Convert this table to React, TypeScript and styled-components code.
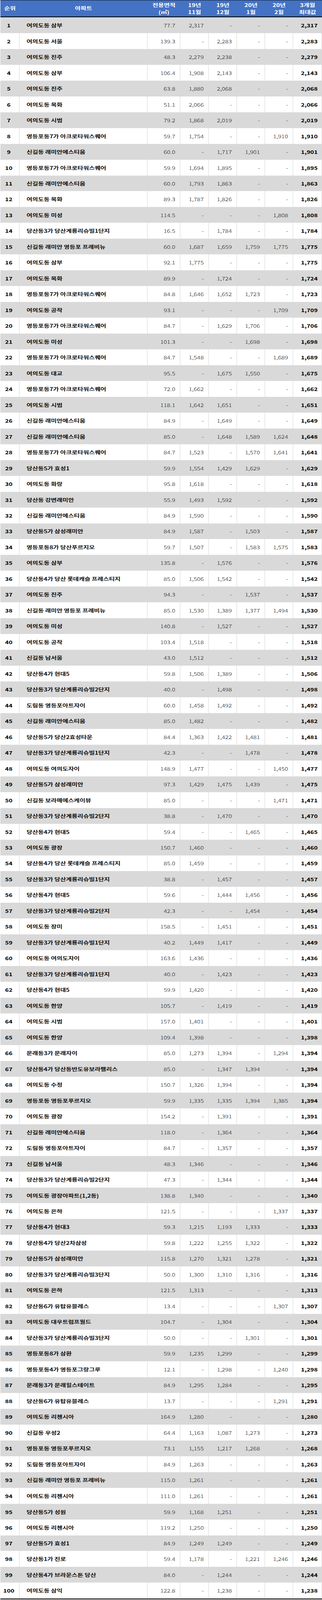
import React from "react";
import styled, { createGlobalStyle } from "styled-components";

const GlobalStyle = createGlobalStyle`
  html, body { margin: 0; padding: 0; background: #ffffff; }
  body { font-family: "Noto Sans CJK KR", "Noto Sans", sans-serif; color: #000; }
  * { box-sizing: border-box; }
`;

const RAW = `여의도동 삼부|77.7|2,317|-|-|-|2,317
여의도동 서울|139.3|-|2,283|-|-|2,283
여의도동 진주|48.3|2,279|2,238|-|-|2,279
여의도동 삼부|106.4|1,908|2,143|-|-|2,143
여의도동 진주|63.8|1,880|2,068|-|-|2,068
여의도동 목화|51.1|2,066|-|-|-|2,066
여의도동 시범|79.2|1,868|2,019|-|-|2,019
영등포동7가 아크로타워스퀘어|59.7|1,754|-|-|1,910|1,910
신길동 래미안에스티움|60.0|-|1,717|1,901|-|1,901
영등포동7가 아크로타워스퀘어|59.9|1,694|1,895|-|-|1,895
신길동 래미안에스티움|60.0|1,793|1,863|-|-|1,863
여의도동 목화|89.3|1,787|1,826|-|-|1,826
여의도동 미성|114.5|-|-|-|1,808|1,808
당산동3가 당산계룡리슈빌1단지|16.5|-|1,784|-|-|1,784
신길동 래미안 영등포 프레비뉴|60.0|1,687|1,659|1,759|1,775|1,775
여의도동 삼부|92.1|1,775|-|-|-|1,775
여의도동 목화|89.9|-|1,724|-|-|1,724
영등포동7가 아크로타워스퀘어|84.8|1,646|1,652|1,723|-|1,723
여의도동 공작|93.1|-|-|-|1,709|1,709
영등포동7가 아크로타워스퀘어|84.7|-|1,629|1,706|-|1,706
여의도동 미성|101.3|-|-|1,698|-|1,698
영등포동7가 아크로타워스퀘어|84.7|1,548|-|-|1,689|1,689
여의도동 대교|95.5|-|1,675|1,550|-|1,675
영등포동7가 아크로타워스퀘어|72.0|1,662|-|-|-|1,662
여의도동 시범|118.1|1,642|1,651|-|-|1,651
신길동 래미안에스티움|84.9|-|1,649|-|-|1,649
신길동 래미안에스티움|85.0|-|1,648|1,589|1,624|1,648
영등포동7가 아크로타워스퀘어|84.7|1,523|-|1,570|1,641|1,641
당산동5가 효성1|59.9|1,554|1,429|1,629|-|1,629
여의도동 화랑|95.8|1,618|-|-|-|1,618
당산동 강변래미안|55.9|1,493|1,592|-|-|1,592
신길동 래미안에스티움|84.9|1,590|-|-|-|1,590
당산동5가 삼성래미안|84.9|1,587|-|1,503|-|1,587
영등포동8가 당산푸르지오|59.7|1,507|-|1,583|1,575|1,583
여의도동 삼부|135.8|-|1,576|-|-|1,576
당산동4가 당산 롯데캐슬 프레스티지|85.0|1,506|1,542|-|-|1,542
여의도동 진주|94.3|-|-|1,537|-|1,537
신길동 래미안 영등포 프레비뉴|85.0|1,530|1,389|1,377|1,494|1,530
여의도동 미성|140.8|-|1,527|-|-|1,527
여의도동 공작|103.4|1,518|-|-|-|1,518
신길동 남서울|43.0|1,512|-|-|-|1,512
당산동4가 현대5|59.8|1,506|1,389|-|-|1,506
당산동3가 당산계룡리슈빌2단지|40.0|-|1,498|-|-|1,498
도림동 영등포아트자이|60.0|1,458|1,492|-|-|1,492
신길동 래미안에스티움|85.0|1,482|-|-|-|1,482
당산동5가 당산2효성타운|84.4|1,363|1,422|1,481|-|1,481
당산동3가 당산계룡리슈빌1단지|42.3|-|-|1,478|-|1,478
여의도동 여의도자이|148.9|1,477|-|-|1,450|1,477
당산동5가 삼성래미안|97.3|1,429|1,475|1,439|-|1,475
신길동 보라매에스케이뷰|85.0|-|-|-|1,471|1,471
당산동3가 당산계룡리슈빌2단지|38.8|-|1,470|-|-|1,470
당산동4가 현대5|59.4|-|-|1,465|-|1,465
여의도동 광장|150.7|1,460|-|-|-|1,460
당산동4가 당산 롯데캐슬 프레스티지|85.0|1,459|-|-|-|1,459
당산동3가 당산계룡리슈빌1단지|38.8|-|1,457|-|-|1,457
당산동4가 현대5|59.6|-|1,444|1,456|-|1,456
당산동3가 당산계룡리슈빌2단지|42.3|-|-|1,454|-|1,454
여의도동 장미|158.5|-|1,451|-|-|1,451
당산동3가 당산계룡리슈빌1단지|40.2|1,449|1,417|-|-|1,449
여의도동 여의도자이|163.6|1,436|-|-|-|1,436
당산동3가 당산계룡리슈빌1단지|40.0|-|1,423|-|-|1,423
당산동4가 현대5|59.9|1,420|-|-|-|1,420
여의도동 한양|105.7|-|1,419|-|-|1,419
여의도동 시범|157.0|1,401|-|-|-|1,401
여의도동 한양|109.4|1,398|-|-|-|1,398
문래동3가 문래자이|85.0|1,273|1,394|-|1,294|1,394
당산동4가 당산동반도유보라팰리스|85.0|-|1,347|1,394|-|1,394
여의도동 수정|150.7|1,326|1,394|-|-|1,394
영등포동 영등포푸르지오|59.9|1,335|1,335|1,394|1,385|1,394
여의도동 광장|154.2|-|1,391|-|-|1,391
신길동 래미안에스티움|118.0|-|1,364|-|-|1,364
도림동 영등포아트자이|84.7|-|1,357|-|-|1,357
신길동 남서울|48.3|1,346|-|-|-|1,346
당산동3가 당산계룡리슈빌2단지|47.3|-|1,344|-|-|1,344
여의도동 광장아파트(1,2동)|138.8|1,340|-|-|-|1,340
여의도동 은하|121.5|-|-|-|1,337|1,337
당산동4가 현대3|59.3|1,215|1,193|1,333|-|1,333
당산동4가 당산2차삼성|59.8|1,222|1,255|1,322|-|1,322
당산동5가 삼성래미안|115.8|1,270|1,321|1,278|-|1,321
당산동3가 당산계룡리슈빌3단지|50.0|1,300|1,310|1,316|-|1,316
여의도동 은하|121.5|1,313|-|-|-|1,313
당산동6가 유탑유블레스|13.4|-|-|-|1,307|1,307
여의도동 대우트럼프월드|104.7|-|1,304|-|-|1,304
당산동3가 당산계룡리슈빌3단지|50.0|-|-|1,301|-|1,301
영등포동8가 삼환|59.9|1,235|1,299|-|-|1,299
영등포동4가 영등포그랑그루|12.1|-|1,298|-|1,240|1,298
문래동3가 문래힐스테이트|84.9|1,295|1,284|-|-|1,295
당산동6가 유탑유블레스|13.7|-|-|-|1,291|1,291
여의도동 리첸시아|164.9|1,280|-|-|-|1,280
신길동 우성2|64.4|1,163|1,087|1,273|-|1,273
영등포동 영등포푸르지오|73.1|1,155|1,217|1,268|-|1,268
도림동 영등포아트자이|84.9|1,263|-|-|-|1,263
신길동 래미안 영등포 프레비뉴|115.0|1,261|-|-|-|1,261
여의도동 리첸시아|111.0|1,261|-|-|-|1,261
당산동5가 성원|59.9|1,168|1,251|-|-|1,251
여의도동 리첸시아|119.2|1,250|-|-|-|1,250
당산동5가 효성1|84.9|1,249|1,249|-|-|1,249
당산동1가 진로|59.4|1,178|-|1,221|1,246|1,246
당산동4가 브라운스톤 당산|84.0|-|1,244|-|-|1,244
여의도동 삼익|122.8|-|1,238|-|-|1,238`;

type RowData = { name: string; area: string; months: string[]; max: string };

const ROWS: RowData[] = RAW.split("\n").map((line) => {
  const p = line.split("|");
  return { name: p[0], area: p[1], months: p.slice(2, 6), max: p[6] };
});

const DESIGN_HEIGHT = 5257;
const COLUMNS = "49px 328px 84px 73px 72px 72px 72px 74px";

const Viewport = styled.div`
  width: 825px;
  overflow: hidden;
`;

const Page = styled.div`
  width: 825px;
  height: ${DESIGN_HEIGHT}px;
  padding-left: 1px;
  transform-origin: 0 0;
`;

const Table = styled.div`
  width: 824px;
  border-bottom: 3px solid #000;
`;

const HeaderRow = styled.div`
  display: grid;
  grid-template-columns: ${COLUMNS};
  height: 57px;
  background: #4472c4;
  border-top: 1px solid #000;
  border-bottom: 3px solid #000;
`;

const HeaderCell = styled.div`
  display: flex;
  flex-direction: column;
  align-items: center;
  justify-content: center;
  text-align: center;
  color: #ffffff;
  font-size: 16px;
  font-weight: 700;
  line-height: 23px;
  white-space: nowrap;
`;

const Row = styled.div<{ $shaded: boolean }>`
  display: grid;
  grid-template-columns: ${COLUMNS};
  height: 51.96px;
  background: ${(p) => (p.$shaded ? "#d9d9d9" : "#ffffff")};
  --line: ${(p) => (p.$shaded ? "#d9d9d9" : "#d4d4d4")};
`;

const Cell = styled.div<{ $align?: "left" | "center" | "right" }>`
  display: flex;
  align-items: center;
  justify-content: ${(p) =>
    p.$align === "left" ? "flex-start" : p.$align === "center" ? "center" : "flex-end"};
  border-right: 1px solid var(--line);
  font-size: 16px;
  line-height: 20px;
  white-space: nowrap;
  overflow: hidden;
`;

const RankCell = styled(Cell)`
  padding-right: 5px;
  font-weight: 700;
  color: #000;
`;

const NameCell = styled(Cell)`
  padding-left: 18px;
  font-weight: 500;
  color: #000;
  -webkit-text-stroke: 0.3px #000;
`;

const NumCell = styled(Cell)`
  padding-right: 12px;
  font-weight: 300;
  color: #111;
`;

const MaxCell = styled(Cell)`
  padding-right: 10px;
  font-weight: 700;
  color: #000;
`;

const HEADERS: string[][] = [
  ["순위"],
  ["아파트"],
  ["전용면적", "(㎡)"],
  ["19년", "11월"],
  ["19년", "12월"],
  ["20년", "1월"],
  ["20년", "2월"],
  ["3개월", "최대값"],
];

export default function App() {
  const vh = typeof window !== "undefined" ? window.innerHeight : DESIGN_HEIGHT;
  const scale = Math.min(1, vh / DESIGN_HEIGHT);
  return (
    <Viewport style={{ height: DESIGN_HEIGHT * scale }}>
      <GlobalStyle />
      <Page style={{ transform: `scaleY(${scale})` }}>
        <Table>
          <HeaderRow>
            {HEADERS.map((lines, i) => (
              <HeaderCell key={i}>
                {lines.map((l, j) => (
                  <span key={j}>{l}</span>
                ))}
              </HeaderCell>
            ))}
          </HeaderRow>
          {ROWS.map((r, i) => (
            <Row key={i} $shaded={i % 2 === 0}>
              <RankCell $align="center">{i + 1}</RankCell>
              <NameCell $align="left">{r.name}</NameCell>
              <NumCell>{r.area}</NumCell>
              {r.months.map((m, j) => (
                <NumCell key={j}>{m}</NumCell>
              ))}
              <MaxCell>{r.max}</MaxCell>
            </Row>
          ))}
        </Table>
      </Page>
    </Viewport>
  );
}
